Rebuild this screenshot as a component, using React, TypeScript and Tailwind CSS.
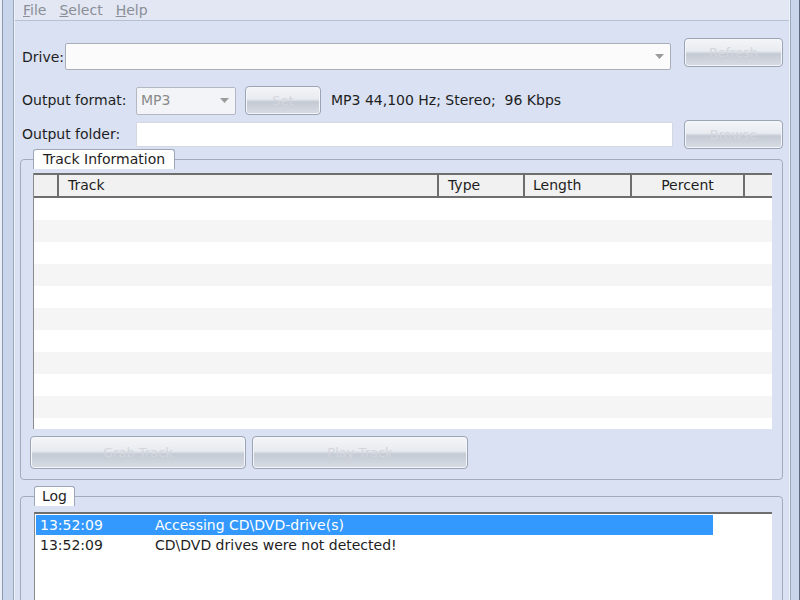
import React from 'react';

const font = { fontFamily: '"DejaVu Sans", Verdana, sans-serif' };

const btnClass =
  'rounded-[4px] border border-[#9ca5b5] bg-[linear-gradient(to_bottom,#f3f5f8_0%,#e8ebf0_45%,#c4cad4_55%,#d7dce4_100%)] text-[13px] text-[#d3d6dc] flex items-center justify-center shadow-[inset_0_0_0_1px_#f4f6fa]';

const DisabledButton: React.FC<{ label: string; className?: string }> = ({ label, className }) => (
  <div className={`${btnClass} ${className ?? ''}`}>{label}</div>
);

const Arrow: React.FC = () => (
  <svg width="9" height="5" viewBox="0 0 9 5" className="shrink-0">
    <path d="M0 0 L9 0 L4.5 5 Z" fill="#9b9b9b" />
  </svg>
);

const Frame: React.FC<{ side: 'left' | 'right' }> = ({ side }) =>
  side === 'left' ? (
    <div className="flex h-full w-[15px] shrink-0">
      <div className="w-[2px] bg-[#e9eef7]" />
      <div className="w-[1px] bg-[#8d9ab0]" />
      <div className="w-[10px] bg-[#c8d5ea]" />
      <div className="w-[1px] bg-[#9aa7bd]" />
      <div className="w-[1px] bg-[#edf1f8]" />
    </div>
  ) : (
    <div className="flex h-full w-[11px] shrink-0">
      <div className="w-[1px] bg-[#eef2f8]" />
      <div className="w-[1px] bg-[#9aa7bd]" />
      <div className="w-[8px] bg-[#c8d5ea]" />
      <div className="w-[1px] bg-[#5e6b80]" />
    </div>
  );

const columns = [
  { label: '', w: 'w-[25px]', align: 'text-left' },
  { label: 'Track', w: 'w-[380px]', align: 'text-left pl-[9px]' },
  { label: 'Type', w: 'w-[86px]', align: 'text-left pl-[9px]' },
  { label: 'Length', w: 'w-[107px]', align: 'text-left pl-[8px]' },
  { label: 'Percent', w: 'w-[113px]', align: 'text-center' },
  { label: '', w: 'flex-1', align: 'text-left' },
];

const App: React.FC = () => {
  const rows = Array.from({ length: 11 });

  return (
    <div className="flex h-[600px] w-[800px] overflow-hidden bg-[#d9e1f2] text-[14px] text-[#1e1e1e]" style={font}>
      <Frame side="left" />
      <div className="flex min-w-0 flex-1 flex-col">
        {/* menu bar */}
        <div className="flex h-[21px] shrink-0 items-center gap-[13px] border-b border-[#b7c1d4] bg-[#e2e7f3] pl-[8px] text-[14px] text-[#8a8e96]">
          <span><span className="underline">F</span>ile</span>
          <span><span className="underline">S</span>elect</span>
          <span><span className="underline">H</span>elp</span>
        </div>

        <div className="flex flex-1 flex-col pl-[7px] pr-[6px]">
          {/* drive */}
          <div className="mt-[17px] flex items-start">
            <span className="mt-[9px] w-[43px]">Drive:</span>
            <div className="mt-[5px] flex h-[27px] w-[606px] items-center justify-end rounded-[2px] border border-[#a9aeb8] bg-[#fbfbfb] pr-[6px]">
              <Arrow />
            </div>
            <DisabledButton label="Refresh" className="ml-auto h-[29px] w-[99px]" />
          </div>

          {/* output format */}
          <div className="mt-[16px] flex items-center">
            <span className="w-[114px]">Output format:</span>
            <div className="flex h-[28px] w-[100px] items-center justify-between rounded-[2px] border border-[#b3b8c2] bg-[#f3f4f7] pl-[4px] pr-[6px] text-[#8a8a8a]">
              MP3
              <Arrow />
            </div>
            <DisabledButton label="Set" className="ml-[9px] h-[29px] w-[76px]" />
            <span className="ml-[10px]">MP3 44,100 Hz; Stereo;&nbsp; 96 Kbps</span>
          </div>

          {/* output folder */}
          <div className="mt-[5px] flex items-center">
            <span className="w-[114px]">Output folder:</span>
            <div className="h-[25px] w-[537px] border border-[#d3d8e2] bg-white" />
            <DisabledButton label="Browse" className="ml-auto h-[29px] w-[99px]" />
          </div>

          {/* track information */}
          <fieldset className="-ml-[2px] rounded-[4px] border border-[#a3acbc] pl-[12px] pr-[10px] pb-[10px]">
            <legend className="h-[20px] rounded-t-[3px] border border-b-0 border-[#9ea7b7] bg-white px-[9px] leading-[19px]">
              Track Information
            </legend>
            <div className="mt-[4px] flex h-[256px] flex-col overflow-hidden border-l border-[#8c8c8c] bg-white">
              <div className="flex h-[25px] shrink-0 border-t-2 border-b-2 border-[#6e6e6e] bg-[#f1f1f1]">
                {columns.map((c, i) => (
                  <div
                    key={i}
                    className={`${c.w} ${c.align} shrink-0 leading-[21px] ${i < columns.length - 1 ? 'border-r-2 border-[#6e6e6e]' : ''}`}
                  >
                    {c.label}
                  </div>
                ))}
              </div>
              {rows.map((_, i) => (
                <div key={i} className={`h-[22px] shrink-0 ${i % 2 === 1 ? 'bg-[#f5f5f5]' : 'bg-white'}`} />
              ))}
            </div>
            <div className="mt-[7px] -ml-[3px] flex gap-[6px]">
              <DisabledButton label="Grab Track" className="h-[33px] w-[216px]" />
              <DisabledButton label="Play Track" className="h-[33px] w-[216px]" />
            </div>
          </fieldset>

          {/* log */}
          <fieldset className="mt-[6px] -ml-[2px] min-h-[200px] rounded-[4px] border border-[#a3acbc] pl-[13px] pr-[10px]">
            <legend className="h-[20px] rounded-t-[3px] border border-b-0 border-[#9ea7b7] bg-white px-[7px] leading-[19px]">
              Log
            </legend>
            <div className="mt-[6px] h-[120px] border-t-2 border-l border-t-[#6e6e6e] border-l-[#8c8c8c] bg-white pt-[1px] pl-[1px]">
              <div className="flex h-[20px] w-[677px] items-center bg-[#3399ff] text-white">
                <span className="w-[119px] pl-[4px]">13:52:09</span>
                <span>Accessing CD\DVD-drive(s)</span>
              </div>
              <div className="flex h-[20px] items-center">
                <span className="w-[119px] pl-[4px]">13:52:09</span>
                <span>CD\DVD drives were not detected!</span>
              </div>
            </div>
          </fieldset>
        </div>
      </div>
      <Frame side="right" />
    </div>
  );
};

export default App;
